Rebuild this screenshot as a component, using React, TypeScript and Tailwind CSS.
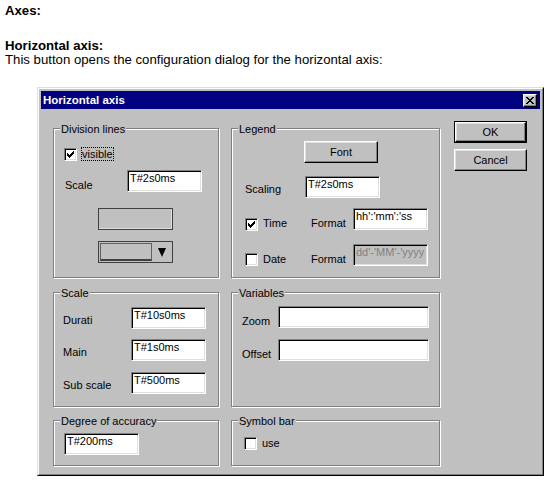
import React from "react";

const raised =
  "border border-t-white border-l-white border-b-black border-r-black shadow-[inset_-1px_-1px_0_#808080,inset_1px_1px_0_#dfdfdf]";

function CheckMark() {
  return (
    <svg width="7" height="7" viewBox="0 0 7 7" shapeRendering="crispEdges">
      <path
        fill="#000"
        d="M6 0h1v1H6z M5 1h2v1H5z M0 2h1v1H0z M4 2h3v1H4z M0 3h2v1H0z M3 3h3v1H3z M0 4h5v1H0z M1 5h3v1H1z M2 6h1v1H2z"
      />
    </svg>
  );
}

function CheckBox({ checked, className = "" }: { checked?: boolean; className?: string }) {
  return (
    <div
      className={`w-[13px] h-[13px] shrink-0 bg-white border border-t-[#808080] border-l-[#808080] border-b-white border-r-white shadow-[inset_1px_1px_0_#000,inset_-1px_-1px_0_#dfdfdf] flex items-center justify-center ${className}`}
    >
      {checked && <CheckMark />}
    </div>
  );
}

function Edit({ w, value, disabled }: { w: string; value?: string; disabled?: boolean }) {
  return (
    <div
      className={`${w} h-[22px] shrink-0 border border-t-[#808080] border-l-[#808080] border-b-white border-r-white shadow-[inset_1px_1px_0_#000,inset_-1px_-1px_0_#dfdfdf] pl-[2px] leading-[14px] whitespace-nowrap overflow-hidden ${
        disabled ? "bg-[#c0c0c0] text-[#808080]" : "bg-white text-black"
      }`}
    >
      {value}
    </div>
  );
}

function Group({
  title,
  className = "",
  children,
}: {
  title: string;
  className?: string;
  children?: React.ReactNode;
}) {
  return (
    <div className={`border border-[#808080] shadow-[1px_1px_0_#fff,inset_1px_1px_0_#fff] ${className}`}>
      <div className="-mt-[7px] ml-[6px] px-[1px] w-fit bg-[#c0c0c0] leading-[14px] whitespace-nowrap">
        {title}
      </div>
      {children}
    </div>
  );
}

function Button({ children, className = "" }: { children: React.ReactNode; className?: string }) {
  return (
    <div className={`${raised} flex items-center justify-center leading-[14px] ${className}`}>{children}</div>
  );
}

export default function App() {
  return (
    <div className="min-h-[481px] bg-white text-black font-['Liberation_Sans',Arial,sans-serif] pt-[4px]">
      <div className="pl-[5px] text-[13.2px] leading-[14px]">
        <div className="font-bold">Axes:</div>
        <div className="font-bold mt-[21px]">Horizontal axis:</div>
        <div>This button opens the configuration dialog for the horizontal axis:</div>
      </div>

      <div className="ml-[37px] mt-[20px] w-[507px] h-[389px] bg-[#c0c0c0] border border-t-[#dfdfdf] border-l-[#dfdfdf] border-b-black border-r-black text-[11px]">
        <div className="h-full border border-t-white border-l-white border-b-[#808080] border-r-[#808080] p-[2px]">
          {/* Title bar */}
          <div className="h-[18px] bg-[#000080] flex items-center justify-between pl-[2px] pr-[3px]">
            <span className="text-white font-bold text-[11.5px] leading-[14px]">Horizontal axis</span>
            <div className={`${raised} w-[14px] h-[13px] bg-[#c0c0c0] flex items-center justify-center`}>
              <svg width="8" height="7" viewBox="0 0 8 7" shapeRendering="crispEdges">
                <path
                  fill="#000"
                  d="M0 0h2v1H0z M6 0h2v1H6z M1 1h2v1H1z M5 1h2v1H5z M2 2h4v1H2z M3 3h2v1H3z M2 4h4v1H2z M1 5h2v1H1z M5 5h2v1H5z M0 6h2v1H0z M6 6h2v1H6z"
                />
              </svg>
            </div>
          </div>

          {/* Body */}
          <div className="flex items-start pt-[12px] pl-[12px]">
            <div className="mt-[7px] flex gap-x-[12px]">
              {/* Left column */}
              <div className="w-[166px] flex flex-col">
                <Group title="Division lines" className="h-[150px]">
                  <div className="flex items-center mt-[11px] ml-[10px]">
                    <CheckBox checked />
                    <span className="ml-[4px] border border-dotted border-black leading-[12px]">visible</span>
                  </div>
                  <div className="flex items-start mt-[9px] ml-[11px]">
                    <span className="w-[62px] mt-[8px] leading-[14px]">Scale</span>
                    <Edit w="w-[75px]" value="T#2s0ms" />
                  </div>
                  <div className="mt-[16px] ml-[44px] w-[75px] h-[22px] border border-[#404040] shadow-[inset_-1px_-1px_0_#dfdfdf]" />
                  <div className="mt-[11px] ml-[44px] w-[75px] h-[22px] border border-[#404040] flex p-[1px]">
                    <div className="flex-1 border border-[#606060] border-b-2 border-b-[#404040]" />
                    <div className="w-[19px] flex items-center justify-center">
                      <svg width="8" height="9" viewBox="0 0 8 9">
                        <polygon points="0,0 8,0 4,9" fill="#000" />
                      </svg>
                    </div>
                  </div>
                </Group>

                <Group title="Scale" className="h-[115px] mt-[14px]">
                  <div className="flex items-start mt-[7px] ml-[9px]">
                    <span className="w-[68px] mt-[6px] leading-[14px] whitespace-nowrap">Durati</span>
                    <Edit w="w-[75px]" value="T#10s0ms" />
                  </div>
                  <div className="flex items-start mt-[10px] ml-[9px]">
                    <span className="w-[68px] mt-[6px] leading-[14px]">Main</span>
                    <Edit w="w-[75px]" value="T#1s0ms" />
                  </div>
                  <div className="flex items-start mt-[11px] ml-[9px]">
                    <span className="w-[68px] mt-[6px] leading-[14px]">Sub scale</span>
                    <Edit w="w-[75px]" value="T#500ms" />
                  </div>
                </Group>

                <Group title="Degree of accuracy" className="h-[46px] mt-[13px]">
                  <div className="mt-[5px] ml-[10px]">
                    <Edit w="w-[75px]" value="T#200ms" />
                  </div>
                </Group>
              </div>

              {/* Right column */}
              <div className="w-[209px] flex flex-col">
                <Group title="Legend" className="h-[150px]">
                  <Button className="mt-[5px] ml-[72px] w-[74px] h-[22px]">Font</Button>
                  <div className="flex items-start mt-[13px] ml-[13px]">
                    <span className="w-[60px] mt-[6px] leading-[14px]">Scaling</span>
                    <Edit w="w-[75px]" value="T#2s0ms" />
                  </div>
                  <div className="flex items-start mt-[10px] ml-[13px]">
                    <CheckBox checked className="mt-[10px]" />
                    <span className="ml-[5px] w-[48px] mt-[8px] leading-[14px]">Time</span>
                    <span className="w-[42px] mt-[8px] leading-[14px]">Format</span>
                    <Edit w="w-[75px]" value="hh':'mm':'ss" />
                  </div>
                  <div className="flex items-start mt-[13px] ml-[13px]">
                    <CheckBox className="mt-[9px]" />
                    <span className="ml-[5px] w-[48px] mt-[8px] leading-[14px]">Date</span>
                    <span className="w-[42px] mt-[8px] leading-[14px]">Format</span>
                    <Edit w="w-[75px]" value="dd'-'MM'-'yyyy" disabled />
                  </div>
                </Group>

                <Group title="Variables" className="h-[115px] mt-[14px]">
                  <div className="flex items-start mt-[6px] ml-[10px]">
                    <span className="w-[36px] mt-[8px] leading-[14px]">Zoom</span>
                    <Edit w="w-[151px]" />
                  </div>
                  <div className="flex items-start mt-[11px] ml-[10px]">
                    <span className="w-[36px] mt-[8px] leading-[14px]">Offset</span>
                    <Edit w="w-[151px]" />
                  </div>
                </Group>

                <Group title="Symbol bar" className="h-[46px] mt-[13px]">
                  <div className="flex items-center mt-[8px] ml-[12px]">
                    <CheckBox />
                    <span className="ml-[5px] leading-[14px]">use</span>
                  </div>
                </Group>
              </div>
            </div>

            {/* Buttons */}
            <div className="ml-[14px] flex flex-col gap-[6px]">
              <div className="w-[73px] h-[22px] border border-black">
                <Button className="w-full h-full">OK</Button>
              </div>
              <Button className="w-[73px] h-[22px]">Cancel</Button>
            </div>
          </div>
        </div>
      </div>
    </div>
  );
}
